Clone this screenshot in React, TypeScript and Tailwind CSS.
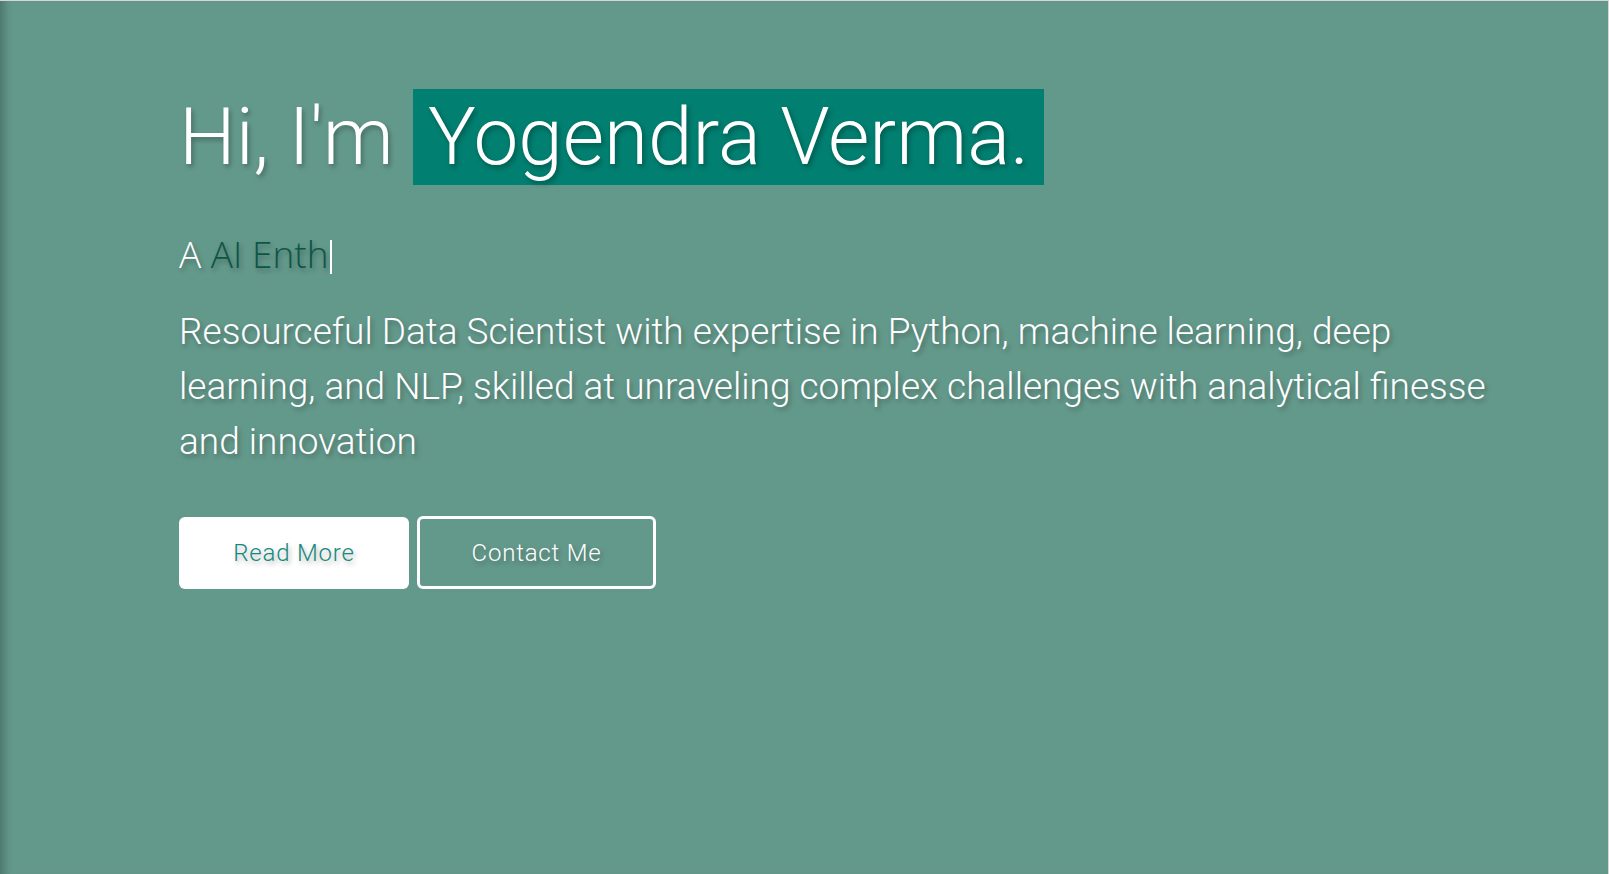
import React from "react";

const shadow = "[text-shadow:2px_3px_5px_rgba(0,0,0,0.3)]";

const Hero = () => {
  return (
    <section className="min-h-screen w-full bg-[#63998b] border-t border-r border-[#d6d6d6] shadow-[inset_12px_0_10px_-8px_rgba(0,0,0,0.25)] font-['Roboto',sans-serif]">
      <div className="pl-[179px] pt-[88px] w-[1505px]">
        <h1 className={`text-white font-light text-[80px] leading-[96px] ${shadow}`}>
          Hi, I'm{" "}
          <span className="bg-[#017f70] px-[15px] py-[1px]">Yogendra Verma.</span>
        </h1>

        <h2
          className={`mt-[42px] font-['Open_Sans',sans-serif] font-light text-[37px] leading-[54px] ${shadow}`}
        >
          <span className="text-white">A </span>
          <span className="text-[#0e5546]">AI Enth</span>
          <span className="inline-block align-[-6px] ml-[1px] w-[2px] h-[34px] bg-white" />
        </h2>

        <p className={`mt-[23px] text-white font-light text-[37px] leading-[55px] ${shadow}`}>
          Resourceful Data Scientist with expertise in Python, machine learning, deep learning, and
          NLP, skilled at unraveling complex challenges with analytical finesse and innovation
        </p>

        <div className="mt-[47px] flex items-center gap-[8px]">
          <button
            className={`w-[230px] h-[72px] rounded-[6px] bg-white text-[#16897d] text-[24px] font-light tracking-[0.8px] ${shadow}`}
          >
            Read More
          </button>
          <button
            className={`w-[239px] h-[73px] rounded-[6px] border-[3px] border-white text-white text-[24px] font-light tracking-[0.8px] ${shadow}`}
          >
            Contact Me
          </button>
        </div>
      </div>
    </section>
  );
};

export default function App() {
  return <Hero />;
}
